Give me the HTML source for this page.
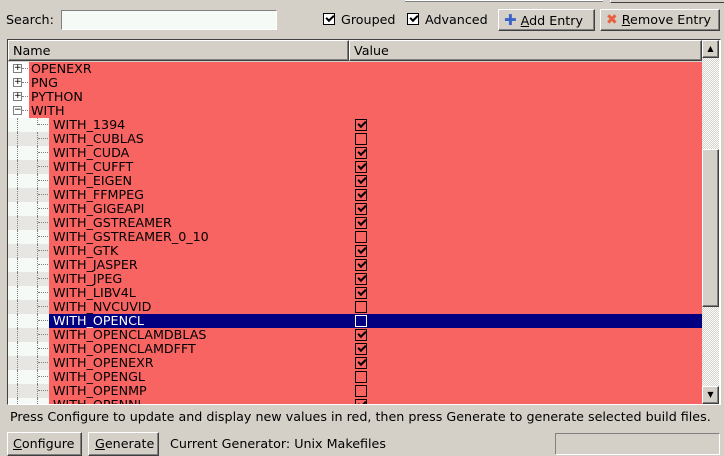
<!DOCTYPE html>
<html><head><style>
*{margin:0;padding:0;box-sizing:border-box}
body{width:724px;height:454px;background:#d4d0c8;font-family:"DejaVu Sans","Liberation Sans",sans-serif;font-size:12.7px;color:#000;position:relative;overflow:hidden}
.a{position:absolute}
.btn{position:absolute;background:#d4d0c8;border:1px solid;border-color:#fff #404040 #404040 #fff;box-shadow:inset -1px -1px 0 #808080;line-height:20px;white-space:nowrap}
.cb{position:absolute;width:12px;height:12px;border:1px solid #000;background:#fff}
.ck::after{content:"";position:absolute;left:2px;top:1px;width:6px;height:3px;border-left:2px solid #000;border-bottom:2px solid #000;transform:rotate(-45deg)}
u{text-decoration:underline}
</style></head><body>
<div class="a" style="left:405px;top:0;width:198px;height:2px;background:#fff;border-bottom:1px solid #808080"></div>
<div class="a" style="left:610px;top:0;width:114px;height:3px;border-bottom:1px solid #404040;border-left:1px solid #fff"></div>
<div class="a" style="left:6px;top:12px">Search:</div>
<div class="a" style="left:61px;top:10px;width:216px;height:20px;background:#f6faf6;border:1px solid;border-color:#808080 #fff #fff #808080"></div>
<div class="cb ck" style="left:323px;top:13px"></div>
<div class="a" style="left:341px;top:12px">Grouped</div>
<div class="cb ck" style="left:407px;top:13px"></div>
<div class="a" style="left:425px;top:12px">Advanced</div>
<div class="btn" style="left:498px;top:9px;width:97px;height:22px;padding-left:5px"><span style="color:#3b64c8;font-weight:bold;font-size:15px">✚</span> <u>A</u>dd Entry</div>
<div class="btn" style="left:600px;top:9px;width:120px;height:22px;padding-left:5px"><span style="color:#e8603c;font-weight:bold;font-size:14px">✖</span> <u>R</u>emove Entry</div>
<div class="a" style="left:7px;top:39px;width:714px;height:366px;border:1px solid;border-color:#404040 #fff #fff #404040;background:#fff"></div>
<div class="a" style="left:8px;top:40px;width:694px;height:22px;background:#d4d0c8"></div>
<div class="btn" style="left:8px;top:40px;width:341px;height:21px;padding-left:4px;line-height:19px">Name</div>
<div class="btn" style="left:349px;top:40px;width:353px;height:21px;padding-left:4px;line-height:19px">Value</div>
<div class="a" style="left:702px;top:40px;width:17px;height:364px;background:repeating-conic-gradient(#d4d0c8 0 25%,#fff 0 50%) 0 0/2px 2px"></div>
<div class="btn" style="left:702px;top:40px;width:17px;height:18px;text-align:center;line-height:15px;font-size:8px">▲</div>
<div class="btn" style="left:702px;top:149px;width:17px;height:158px"></div>
<div class="btn" style="left:702px;top:386px;width:17px;height:18px;text-align:center;line-height:15px;font-size:8px">▼</div>
<div class="a" style="left:8px;top:62px;width:694px;height:342px;overflow:hidden">
<div id="rows"></div>
</div>
<script>
var tops=[["OPENEXR","+"],["PNG","+"],["PYTHON","+"],["WITH","−"]];
var ch=[["1394",1],["CUBLAS",0],["CUDA",1],["CUFFT",1],["EIGEN",1],["FFMPEG",1],["GIGEAPI",1],["GSTREAMER",1],["GSTREAMER_0_10",0],["GTK",1],["JASPER",1],["JPEG",1],["LIBV4L",1],["NVCUVID",0],["OPENCL",0],["OPENCLAMDBLAS",1],["OPENCLAMDFFT",1],["OPENEXR",1],["OPENGL",0],["OPENMP",0],["OPENNI",1]];
var h="";
tops.forEach(function(r,i){var y=i*14;
h+='<div class="a" style="left:0;top:'+y+'px;width:694px;height:14px;background:#fff"></div>';
h+='<div class="a" style="left:21px;top:'+y+'px;width:673px;height:14px;background:#f86461"></div>';
h+='<div class="a" style="left:5px;top:'+(y+2)+'px;width:9px;height:9px;border:1px solid #808080;background:#fff;font-size:9px;line-height:7px;text-align:center">'+r[1]+'</div>';
h+='<div class="a" style="left:14px;top:'+(y+6)+'px;width:6px;border-top:1px dotted #808080"></div>';
h+='<div class="a" style="left:23px;top:'+y+'px;line-height:14px">'+r[0]+'</div>';});
ch.forEach(function(r,i){var y=(i+4)*14;var sel=r[0]=="OPENCL";
h+='<div class="a" style="left:0;top:'+y+'px;width:41px;height:14px;background:'+(i%2?'#e8e6e2':'#f6faf6')+'"></div>';
h+='<div class="a" style="left:9px;top:'+y+'px;height:14px;border-left:1px dotted #808080"></div>';
h+='<div class="a" style="left:29px;top:'+y+'px;height:'+(i==0?7:14)+'px;border-left:1px dotted #808080"></div>';
h+='<div class="a" style="left:30px;top:'+(y+6)+'px;width:10px;border-top:1px dotted #808080"></div>';
h+='<div class="a" style="left:41px;top:'+y+'px;width:653px;height:14px;background:'+(sel?'#000080':'#f86461')+'"></div>';
h+='<div class="a" style="left:45px;top:'+y+'px;line-height:14px;color:'+(sel?'#fff':'#000')+'">WITH_'+r[0]+'</div>';
h+='<div class="cb'+(r[1]?' ck':'')+'" style="left:347px;top:'+(y+1)+'px;background:'+(sel?'#000080':'transparent')+';border-color:'+(sel?'#fff':'#000')+'"></div>';});
document.getElementById("rows").innerHTML=h;
</script>
<div class="a" style="left:10px;top:409px;white-space:nowrap">Press Configure to update and display new values in red, then press Generate to generate selected build files.</div>
<div class="btn" style="left:7px;top:432px;width:75px;height:24px;padding-left:5px;line-height:22px"><u>C</u>onfigure</div>
<div class="btn" style="left:88px;top:432px;width:71px;height:24px;padding-left:6px;line-height:22px"><u>G</u>enerate</div>
<div class="a" style="left:170px;top:436px">Current Generator: Unix Makefiles</div>
<div class="a" style="left:555px;top:433px;width:165px;height:22px;border:1px solid;border-color:#808080 #fff #fff #808080"></div>
</body></html>
